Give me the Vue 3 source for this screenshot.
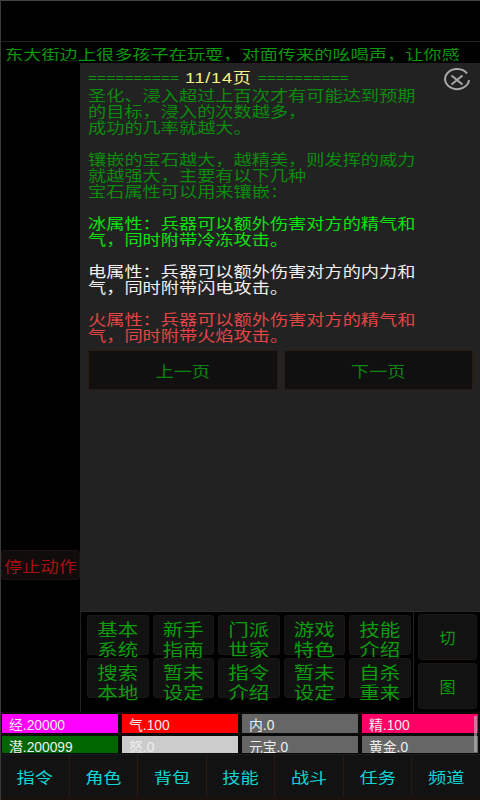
<script setup>
const helpLines = [
  { text: '圣化、浸入超过上百次才有可能达到预期', type: 'dim' },
  { text: '的目标，浸入的次数越多，', type: 'dim' },
  { text: '成功的几率就越大。', type: 'dim' },
  { text: '', type: 'dim' },
  { text: '镶嵌的宝石越大，越精美，则发挥的威力', type: 'dim' },
  { text: '就越强大，主要有以下几种', type: 'dim' },
  { text: '宝石属性可以用来镶嵌：', type: 'dim' },
  { text: '', type: 'dim' },
  { text: '冰属性：兵器可以额外伤害对方的精气和', type: 'ice' },
  { text: '气，同时附带冷冻攻击。', type: 'ice' },
  { text: '', type: 'dim' },
  { text: '电属性：兵器可以额外伤害对方的内力和', type: 'volt' },
  { text: '气，同时附带闪电攻击。', type: 'volt' },
  { text: '', type: 'dim' },
  { text: '火属性：兵器可以额外伤害对方的精气和', type: 'fire' },
  { text: '气，同时附带火焰攻击。', type: 'fire' },
]

const commands = [
  ['基本', '系统'], ['新手', '指南'], ['门派', '世家'], ['游戏', '特色'], ['技能', '介绍'],
  ['搜索', '本地'], ['暂未', '设定'], ['指令', '介绍'], ['暂未', '设定'], ['自杀', '重来'],
]

const stats = [
  { label: '经.20000', color: '#ff00ff' },
  { label: '气.100', color: '#ff0000' },
  { label: '内.0', color: '#666666' },
  { label: '精.100', color: '#ff0066' },
  { label: '潜.200099', color: '#006600' },
  { label: '怒.0', color: '#cccccc' },
  { label: '元宝.0', color: '#666666' },
  { label: '黄金.0', color: '#666666' },
]

const tabs = ['指令', '角色', '背包', '技能', '战斗', '任务', '频道']
</script>

<template>
  <div class="game">
    <div class="top-bar"></div>
    <div class="ticker">
      <div class="ticker-clip">
        <div class="ticker-text">东大街边上很多孩子在玩耍，对面传来的吆喝声，让你感</div>
      </div>
    </div>

    <div class="middle">
      <div class="side">
        <button type="button" class="stop-btn"><span class="squash">停止动作</span></button>
      </div>

      <div class="content">
        <div class="panel">
          <svg class="close-icon" width="28" height="24" viewBox="0 0 28 24">
            <path d="M24 5.5A12 10 0 1 0 26 12" fill="none" stroke="#a8a8a8" stroke-width="2" />
            <path d="M8.5 7.5L19.5 16.5M19.5 7.5L8.5 16.5" fill="none" stroke="#a8a8a8" stroke-width="2" />
          </svg>
          <p class="line page-line">
            <span class="rule">==========</span>
            <span class="page-no">11/14页</span>
            <span class="rule">==========</span>
          </p>
          <p v-for="(line, i) in helpLines" :key="i" class="line" :class="line.type">{{ line.text }}</p>
          <div class="pager">
            <button type="button" class="page-btn"><span class="squash">上一页</span></button>
            <button type="button" class="page-btn"><span class="squash">下一页</span></button>
          </div>
        </div>

        <div class="command-area">
          <div class="command-grid">
            <button v-for="(item, i) in commands" :key="i" type="button" class="cmd-btn">
              <span class="squash">{{ item[0] }}<br />{{ item[1] }}</span>
            </button>
          </div>
          <div class="map-btns">
            <button type="button" class="map-btn">切</button>
            <button type="button" class="map-btn">图</button>
          </div>
        </div>
      </div>
    </div>

    <div class="stats">
      <div v-for="item in stats" :key="item.label" class="stat" :style="{ backgroundColor: item.color }">
        {{ item.label }}
      </div>
      <div class="scroll-thumb"></div>
    </div>

    <div class="tabs">
      <button v-for="tab in tabs" :key="tab" type="button" class="tab"><span class="squash">{{ tab }}</span></button>
    </div>
  </div>
</template>

<style scoped>
.game {
  width: 480px;
  height: 800px;
  display: flex;
  flex-direction: column;
  overflow: hidden;
  box-sizing: border-box;
  border-left: 1px solid #3a3a3a;
  background: #000;
  font-family: "Noto Sans CJK SC", "Liberation Sans", sans-serif;
}

button {
  font-family: inherit;
  padding: 0;
  cursor: pointer;
}

/* the old game font is flatter than Noto, so glyphs get pressed a bit */
.squash {
  display: inline-block;
  transform: scaleY(0.84);
}

.top-bar {
  height: 42px;
  flex: none;
  box-sizing: border-box;
  border-top: 1px solid #444;
  border-bottom: 1px solid #222;
}

.ticker {
  height: 21px;
  flex: none;
  box-sizing: border-box;
  padding: 6px 0 0 4px;
}

.ticker-clip {
  height: 13px;
  overflow: hidden;
}

.ticker-text {
  color: #0b960b;
  font-size: 18.2px;
  line-height: 10px;
  white-space: nowrap;
  transform: scaleY(0.84);
}

.middle {
  flex: 1;
  min-height: 0;
  display: flex;
}

.side {
  width: 79px;
  flex: none;
  padding-top: 487px;
}

.stop-btn {
  display: block;
  width: 79px;
  height: 30px;
  border: 1px solid #1c1210;
  border-radius: 3px;
  background: #100c0c;
  color: #a80f0f;
  font-size: 18.2px;
  line-height: 28px;
  white-space: nowrap;
}

.content {
  flex: 1;
  min-width: 0;
  display: flex;
  flex-direction: column;
}

.panel {
  position: relative;
  height: 548px;
  flex: none;
  box-sizing: border-box;
  padding: 7px 7px 0 8px;
  background: #222;
}

.close-icon {
  position: absolute;
  top: 5px;
  right: 9px;
}

.line {
  height: 16px;
  margin: 0;
  font-size: 18.2px;
  line-height: 16px;
  white-space: nowrap;
  transform: scaleY(0.84);
}

.page-line {
  display: flex;
  gap: 6px;
}

.rule {
  color: #0f960f;
  font-family: "Liberation Sans", sans-serif;
  font-size: 15.6px;
}

.page-no {
  color: #f6f48a;
  font-family: "Liberation Sans", "Noto Sans CJK SC", sans-serif;
  font-size: 18.2px;
  letter-spacing: 0.7px;
}

.dim {
  color: #0c8c0c;
}

.ice {
  color: #0ee00e;
}

.volt {
  color: #f0f0f0;
}

.fire {
  color: #e24545;
}

.pager {
  display: flex;
  gap: 6px;
  margin-top: 8px;
}

.page-btn {
  width: 190px;
  height: 40px;
  border: 1px solid #2a1c14;
  background: #101010;
  color: #0c860c;
  font-size: 18.2px;
}

.command-area {
  flex: 1;
  min-height: 0;
  display: flex;
  border-top: 1px solid #2a2a2a;
  border-left: 1px solid #222;
}

.command-grid {
  width: 333px;
  flex: none;
  box-sizing: border-box;
  display: grid;
  grid-template-columns: repeat(5, 61.5px);
  grid-auto-rows: 40px;
  column-gap: 4px;
  row-gap: 3px;
  padding: 3px 0 0 6px;
  border-right: 1px solid #222;
}

.cmd-btn {
  border: 1px solid #1d1612;
  border-radius: 3px;
  background: #121212;
  color: #0c9c0c;
  font-size: 20.5px;
  line-height: 23px;
}

.map-btns {
  flex: 1;
  display: flex;
  flex-direction: column;
  gap: 3px;
  padding: 2px 3px 0 4px;
}

.map-btn {
  height: 46px;
  border: 1px solid #1d1612;
  border-radius: 3px;
  background: #121212;
  color: #0c9c0c;
  font-size: 16px;
}

.stats {
  position: relative;
  height: 42px;
  flex: none;
  box-sizing: border-box;
  display: grid;
  grid-template-columns: repeat(4, 116px);
  grid-template-rows: 19px 17px;
  column-gap: 4px;
  row-gap: 3px;
  padding: 2px 0 0 1px;
  background: #0a0a0a;
  overflow: hidden;
}

.stat {
  padding-left: 7px;
  color: #eee;
  font-family: "Liberation Sans", "Noto Sans CJK SC", sans-serif;
  font-size: 13.8px;
  line-height: 24px;
  overflow: hidden;
  white-space: nowrap;
}

.scroll-thumb {
  position: absolute;
  top: 4px;
  right: 3px;
  width: 3px;
  height: 36px;
  background: rgba(190, 190, 190, 0.6);
}

.tabs {
  height: 46px;
  flex: none;
  box-sizing: border-box;
  display: flex;
  background: #121212;
  border-top: 1px solid #1a1a1a;
  border-bottom: 3px solid #1a100c;
}

.tab {
  flex: 1;
  border: 0;
  border-right: 1px solid #2a1a12;
  background: transparent;
  color: #0fd6d6;
  font-size: 18.2px;
}

.tab:last-child {
  border-right: 0;
}
</style>
